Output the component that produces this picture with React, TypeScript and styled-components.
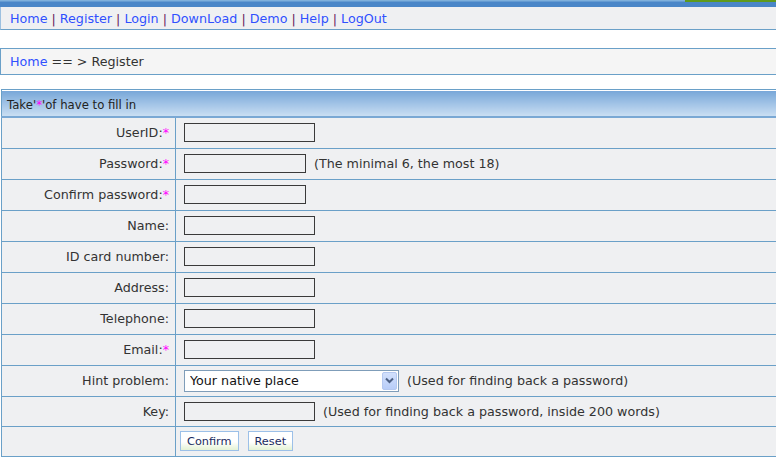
import React from "react";
import styled, { createGlobalStyle } from "styled-components";

const palette = {
    Border: "#6aa0c8",
    NavBg: "#eff0f2",
    CrumbBg: "#f5f5f5",
    RowBg: "#eff0f2",
    Link: "#3050ff",
    Text: "#333333",
    Star: "#ff00ff",
};

const font = `"DejaVu Sans", Verdana, sans-serif`;

const GlobalStyle = createGlobalStyle`
    html, body {
        margin: 0;
        padding: 0;
        background: #ffffff;
        overflow: hidden;
    }
    body {
        font-family: ${font};
        font-size: 12.7px;
        color: ${palette.Text};
    }
`;

const Page = styled.div`
    width: 800px;
    display: flex;
    flex-direction: column;
`;

const TopBar = styled.div`
    height: 7px;
    display: flex;
    justify-content: flex-end;
    background: linear-gradient(#7fb0dc 0px, #7fb0dc 1px, #4a86c8 2px, #4a86c8 7px);
`;

const Banner = styled.div`
    width: 115px;
    height: 2px;
    background: #5f9a1c;
`;

const Nav = styled.div`
    height: 23px;
    display: flex;
    align-items: center;
    padding: 1px 0 0 9px;
    box-sizing: border-box;
    background: ${palette.NavBg};
    border-left: 1px solid #9cc0e0;
    border-bottom: 1px solid ${palette.Border};
    white-space: pre;
`;

const Link = styled.a`
    color: ${palette.Link};
    text-decoration: none;
`;

const Sep = styled.span`
    color: #6a2060;
`;

const Crumb = styled.div`
    margin-top: 18px;
    height: 25px;
    display: flex;
    align-items: center;
    padding-left: 9px;
    background: ${palette.CrumbBg};
    border: 1px solid ${palette.Border};
    border-right: none;
    white-space: pre;
`;

const Table = styled.table`
    margin-top: 14px;
    margin-left: 1px;
    width: 790px;
    border-collapse: collapse;
    border-left: 1px solid ${palette.Border};
    border-top: 1px solid ${palette.Border};
`;

const HeaderCell = styled.th`
    height: 23px;
    padding: 3px 0 0 5px;
    text-align: left;
    font-weight: normal;
    font-size: 11.7px;
    color: #222;
    background: linear-gradient(#76a6d8, #cbdff3);
    box-shadow: inset 0 1px 0 #ffffff;
    border-bottom: 2px solid #7aa8d4;
`;

const Row = styled.tr<{ tall?: boolean }>`
    height: ${({ tall }) => (tall ? "31px" : "30px")};
    background: ${palette.RowBg};
`;

const LabelCell = styled.td`
    width: 167px;
    padding: 0 6px 0 0;
    text-align: right;
    border: 1px solid ${palette.Border};
    border-left: none;
    white-space: nowrap;
`;

const FieldCell = styled.td`
    padding: 0 0 0 8px;
    border-top: 1px solid ${palette.Border};
    border-bottom: 1px solid ${palette.Border};
    white-space: nowrap;
`;

const Star = styled.span`
    color: ${palette.Star};
`;

const Input = styled.input<{ w?: number }>`
    width: ${({ w }) => w || 131}px;
    height: 19px;
    box-sizing: border-box;
    margin: 0;
    border: 1px solid #3a3a3a;
    background: ${palette.RowBg};
    vertical-align: middle;
`;

const Hint = styled.span<{ gap?: number }>`
    margin-left: ${({ gap }) => gap || 8}px;
    vertical-align: middle;
`;

const SelectBox = styled.div`
    position: relative;
    display: inline-block;
    vertical-align: middle;
`;

const Select = styled.select`
    width: 215px;
    height: 22px;
    margin: 0;
    padding: 0 0 0 5px;
    appearance: none;
    border: 1px solid #7f9db9;
    background: #ffffff;
    font-family: ${font};
    font-size: 12.7px;
    color: #111;
`;

const Arrow = styled.span`
    position: absolute;
    right: 2px;
    top: 2px;
    width: 15px;
    height: 18px;
    display: flex;
    align-items: center;
    justify-content: center;
    box-sizing: border-box;
    border: 1px solid #b4c8f0;
    border-radius: 2px;
    background: linear-gradient(#d2e0fc, #b8cdf8);
    pointer-events: none;
`;

const Button = styled.button`
    height: 20px;
    margin: 0 9px 0 0;
    padding: 0 6px;
    border: 1px solid #9cc0e8;
    background: linear-gradient(#ffffff 55%, #e4f2d4);
    font-family: ${font};
    font-size: 11.3px;
    color: #1a2a60;
    vertical-align: middle;
`;

const ButtonCell = styled(FieldCell)`
    padding-left: 4px;
`;

type Field = {
    label: string;
    required?: boolean;
    width?: number;
    hint?: string;
};

const fields: Field[] = [
    { label: "UserID", required: true },
    { label: "Password", required: true, width: 122, hint: "(The minimal 6, the most 18)" },
    { label: "Confirm password", required: true, width: 122 },
    { label: "Name" },
    { label: "ID card number" },
    { label: "Address" },
    { label: "Telephone" },
    { label: "Email", required: true },
];

const navItems = ["Home", "Register", "Login", "DownLoad", "Demo", "Help", "LogOut"];

const App = () => {
    return (
        <Page>
            <GlobalStyle />
            <TopBar>
                <Banner />
            </TopBar>
            <Nav>
                {navItems.map((item, i) => (
                    <React.Fragment key={item}>
                        {i > 0 && <Sep> | </Sep>}
                        <Link href="#">{item}</Link>
                    </React.Fragment>
                ))}
            </Nav>
            <Crumb>
                <Link href="#">Home</Link> == &gt; Register
            </Crumb>
            <Table>
                <tbody>
                    <tr>
                        <HeaderCell colSpan={2}>
                            Take'<Star>*</Star>'of have to fill in
                        </HeaderCell>
                    </tr>
                    {fields.map((f) => (
                        <Row key={f.label} tall>
                            <LabelCell>
                                {f.label}:{f.required && <Star>*</Star>}
                            </LabelCell>
                            <FieldCell>
                                <Input w={f.width} type={f.label.includes("assword") ? "password" : "text"} />
                                {f.hint && <Hint>{f.hint}</Hint>}
                            </FieldCell>
                        </Row>
                    ))}
                    <Row tall>
                        <LabelCell>Hint problem:</LabelCell>
                        <FieldCell>
                            <SelectBox>
                                <Select defaultValue="native">
                                    <option value="native">Your native place</option>
                                </Select>
                                <Arrow>
                                    <svg width="9" height="7" viewBox="0 0 9 7">
                                        <path d="M1 1.5 L4.5 5 L8 1.5" fill="none" stroke="#4d6185" strokeWidth="2" />
                                    </svg>
                                </Arrow>
                            </SelectBox>
                            <Hint>(Used for finding back a password)</Hint>
                        </FieldCell>
                    </Row>
                    <Row>
                        <LabelCell>Key:</LabelCell>
                        <FieldCell>
                            <Input />
                            <Hint>(Used for finding back a password, inside 200 words)</Hint>
                        </FieldCell>
                    </Row>
                    <Row>
                        <LabelCell />
                        <ButtonCell>
                            <Button type="button">Confirm</Button>
                            <Button type="reset">Reset</Button>
                        </ButtonCell>
                    </Row>
                </tbody>
            </Table>
        </Page>
    );
};

export default App;
